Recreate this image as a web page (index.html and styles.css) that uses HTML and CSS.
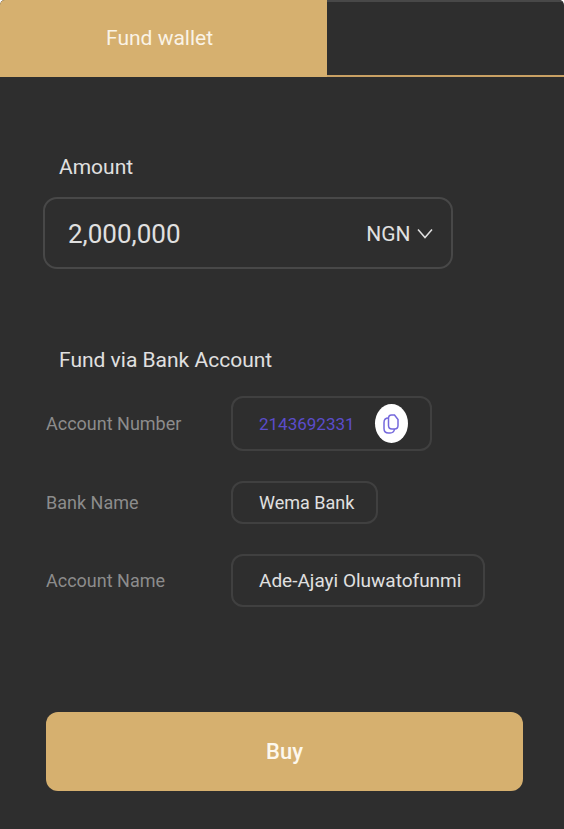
FILE: index.html
```html
<!DOCTYPE html>
<html lang="en">
<head>
<meta charset="utf-8">
<meta name="viewport" content="width=device-width, initial-scale=1">
<title>Fund wallet</title>
<link rel="stylesheet" href="styles.css">
</head>
<body>
<main class="card">
  <nav class="tabs">
    <a class="tab" href="#fund" aria-current="page">Fund wallet</a>
  </nav>
  <form class="form" id="fund">
    <label class="title" for="amount">Amount</label>
    <div class="amount">
      <input class="amount-input" id="amount" type="text" inputmode="numeric" value="2,000,000">
      <div class="currency">
        <select class="currency-select" aria-label="Currency">
          <option>NGN</option>
        </select>
        <svg class="chevron" viewBox="0 0 16 12" aria-hidden="true"><path d="M1 1.5 8 9.5 15 1.5"/></svg>
      </div>
    </div>
    <h2 class="title">Fund via Bank Account</h2>
    <dl class="details">
      <div class="row">
        <dt class="term">Account Number</dt>
        <dd class="value value-number">
          <span>2143692331</span>
          <button class="copy" type="button" aria-label="Copy account number">
            <svg class="copy-icon" viewBox="0 0 16 20" aria-hidden="true">
              <path d="M8.500 1h3l3.500 4.500v6q0 3.500-3.500 3.500H9q-3.500 0-3.500-3.500v-7Q5.500 1 8.500 1z"/>
              <path d="M5.500 4Q1 4 1 8.500v6Q1 19 5.500 19H7q4 0 4.500-4"/>
            </svg>
          </button>
        </dd>
      </div>
      <div class="row">
        <dt class="term">Bank Name</dt>
        <dd class="value value-bank">Wema Bank</dd>
      </div>
      <div class="row">
        <dt class="term">Account Name</dt>
        <dd class="value value-name">Ade-Ajayi Oluwatofunmi</dd>
      </div>
    </dl>
    <button class="buy" type="submit">Buy</button>
  </form>
</main>
</body>
</html>
```
FILE: styles.css
```css
* {
  box-sizing: border-box;
}

body {
  margin: 0;
  background: #fff;
  color: #e0e0e0;
  font-family: Roboto, "Noto Sans", sans-serif;
}

.card {
  min-height: 100vh;
  overflow: hidden;
  border-radius: 5px 5px 0 0;
  background: #2e2e2e;
}

.tabs {
  display: flex;
  height: 77px;
  border-top: 2px solid #484848;
  border-bottom: 2px solid #c9a164;
}

.tab {
  display: flex;
  align-items: center;
  justify-content: center;
  width: 58%;
  margin: -2px 0;
  padding: 0 8px 2px 0;
  background: #d6b06f;
  color: #faf3e6;
  font-size: 21px;
  text-decoration: none;
}

.form {
  padding: 77px 41px 38px 46px;
}

.title {
  display: block;
  margin: 0 0 0 13px;
  font-size: 21px;
  font-weight: 400;
  line-height: 26px;
}

.amount {
  display: flex;
  align-items: center;
  justify-content: space-between;
  width: 86%;
  height: 72px;
  margin: 17px 0 78px -3px;
  padding: 2px 18px 0 23px;
  border: 2px solid #484848;
  border-radius: 14px;
}

.amount-input {
  flex: 1;
  min-width: 0;
  padding: 0;
  border: 0;
  background: none;
  color: inherit;
  font: 26px Roboto, sans-serif;
}

.currency {
  display: flex;
  align-items: center;
  gap: 6px;
}

.currency-select {
  padding: 0;
  border: 0;
  appearance: none;
  background: none;
  color: inherit;
  font: 21px Roboto, sans-serif;
}

.chevron {
  width: 16px;
  height: 12px;
  fill: none;
  stroke: #e0e0e0;
  stroke-width: 1.5;
}

.details {
  display: grid;
  gap: 30px;
  margin: 23px 0 105px;
}

.row {
  display: grid;
  grid-template-columns: 185px 1fr;
  align-items: center;
  justify-items: start;
}

.term {
  color: #8c8c8c;
  font-size: 18px;
}

.value {
  display: flex;
  align-items: center;
  margin: 0;
  padding: 0 22px 0 26px;
  border: 2px solid #404040;
  border-radius: 12px;
  font-size: 18px;
}

.value-number {
  gap: 20px;
  height: 55px;
  color: #5b4ccb;
  font-size: 17px;
}

.value-bank {
  height: 43px;
}

.value-name {
  height: 53px;
  font-size: 19px;
}

.copy {
  display: grid;
  place-items: center;
  width: 33px;
  height: 39px;
  padding: 0;
  border: 0;
  border-radius: 50%;
  background: #fff;
}

.copy-icon {
  width: 16px;
  height: 20px;
  fill: none;
  stroke: #7468dc;
  stroke-width: 1.5;
}

.buy {
  width: 100%;
  height: 79px;
  border: 0;
  border-radius: 12px;
  background: #d6b06f;
  color: #fdf8ee;
  font: 500 22px Roboto, sans-serif;
}
```
